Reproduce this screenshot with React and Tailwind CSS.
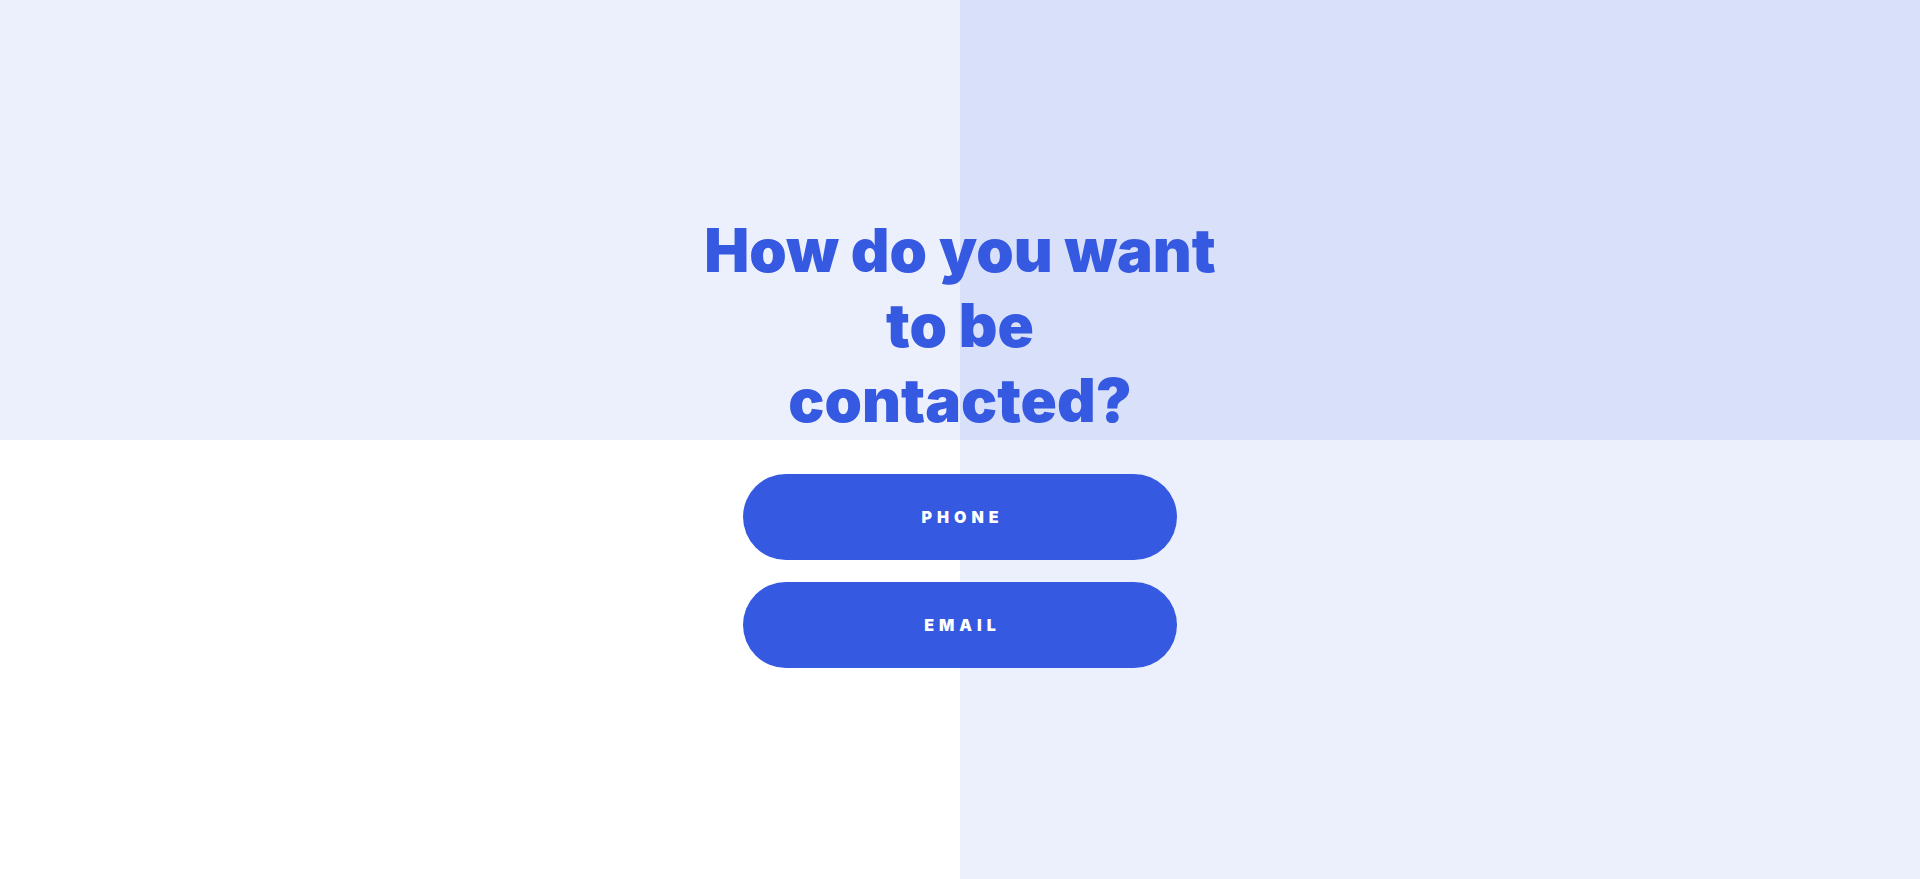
const options = ["Phone", "Email"];

function ContactButton({ label }) {
  return (
    <button
      type="button"
      className="h-[86px] w-full rounded-full bg-[#3559e0] pl-[5px] text-base font-black uppercase tracking-[5px] text-white hover:opacity-90"
    >
      {label}
    </button>
  );
}

export default function App() {
  return (
    <main className="relative flex min-h-screen items-center justify-center bg-white pt-0.5 font-['Inter',sans-serif]">
      {/* checkered backdrop */}
      <div className="absolute inset-0 grid grid-cols-2 grid-rows-2">
        <div className="bg-[#ecf0fd]" />
        <div className="bg-[#d9e0fa]" />
        <div className="bg-white" />
        <div className="bg-[#ecf0fd]" />
      </div>

      <section className="relative flex w-full max-w-[540px] flex-col items-center gap-9">
        <h1 className="text-center text-[60px] leading-[75px] font-black text-[#3559e0]">
          How do you want
          <br />
          to be
          <br />
          contacted?
        </h1>
        <div className="flex w-full max-w-[434px] flex-col gap-[22px]">
          {options.map((label) => (
            <ContactButton key={label} label={label} />
          ))}
        </div>
      </section>
    </main>
  );
}
